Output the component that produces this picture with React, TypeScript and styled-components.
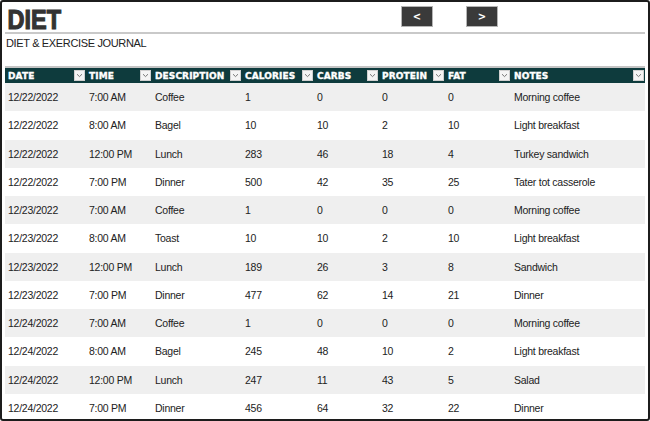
import React from "react";
import styled, { createGlobalStyle } from "styled-components";

const Global = createGlobalStyle`
  html, body { margin: 0; padding: 0; background: #fff; }
  body { font-family: "Liberation Sans", Arial, sans-serif; }
`;

const Frame = styled.div`
  width: 650px;
  height: 421px;
  box-sizing: border-box;
  border: 2px solid #1c1c1c;
  border-radius: 3px;
  padding: 0 3px;
  overflow: hidden;
  background: #fff;
`;

const TitleBar = styled.div`
  display: grid;
  grid-template-columns: 396px 65px 40px;
  align-items: start;
  height: 30px;
  border-bottom: 2px solid #c9c9c9;
`;

const Title = styled.h1`
  margin: 0;
  padding: 5px 0 0 3px;
  font-family: "Liberation Sans", Arial, sans-serif;
  font-weight: 700;
  font-size: 28px;
  line-height: 26px;
  letter-spacing: 0px;
  color: #333;
  -webkit-text-stroke: 1.2px #333;
  transform: scaleX(0.84);
  transform-origin: left center;
`;

const NavButton = styled.button`
  margin-top: 4px;
  width: 32px;
  height: 21px;
  padding: 0;
  background: #3a3a3a;
  border: 1px solid #b5b5b5;
  color: #fff;
  font-family: "DejaVu Sans", sans-serif;
  font-weight: 700;
  font-size: 10px;
  line-height: 19px;
  cursor: pointer;
`;

const Subtitle = styled.div`
  padding: 3px 0 0 1px;
  font-size: 11px;
  line-height: 13px;
  color: #222;
  letter-spacing: -0.35px;
`;

const Table = styled.table`
  margin-top: 16px;
  width: 640px;
  border-collapse: collapse;
  table-layout: fixed;
  border-top: 2px solid #c4c4c4;
`;

const HeadCell = styled.th<{ $w?: number }>`
  box-sizing: border-box;
  width: ${(p) => (p.$w ? `${p.$w}px` : "auto")};
  height: 16px;
  padding: 0 1px 0 3px;
  background: #0e3b3d;
  color: #fff;
  text-align: left;
  vertical-align: middle;
`;

const HeadInner = styled.div`
  display: flex;
  align-items: center;
  justify-content: space-between;
  font-family: "DejaVu Sans", sans-serif;
  font-weight: 700;
  font-size: 9px;
  letter-spacing: 0.1px;
  white-space: nowrap;
  -webkit-text-stroke: 0.35px #fff;
`;

const FilterBox = styled.span`
  display: flex;
  align-items: center;
  justify-content: center;
  width: 11px;
  height: 11px;
  background: #f4f4f4;
  border: 1px solid #d0d0d0;
  box-sizing: border-box;
  flex-shrink: 0;
  -webkit-text-stroke: 0;
`;

const Row = styled.tr<{ $alt: boolean }>`
  height: 28.25px;
  background: ${(p) => (p.$alt ? "#efefef" : "#fff")};
`;

const Cell = styled.td`
  padding: 0 0 0 3px;
  font-size: 10.5px;
  color: #222;
  white-space: nowrap;
  overflow: hidden;
  vertical-align: middle;
  letter-spacing: -0.25px;
`;

const Chevron = () => (
  <svg width="7" height="5" viewBox="0 0 7 5">
    <path d="M1 1.2 L3.5 3.6 L6 1.2" fill="none" stroke="#777" strokeWidth="1" />
  </svg>
);

const columns: { label: string; w?: number }[] = [
  { label: "DATE", w: 81 },
  { label: "TIME", w: 66 },
  { label: "DESCRIPTION", w: 90 },
  { label: "CALORIES", w: 72 },
  { label: "CARBS", w: 65 },
  { label: "PROTEIN", w: 66 },
  { label: "FAT", w: 66 },
  { label: "NOTES" },
];

const rows: string[][] = [
  ["12/22/2022", "7:00 AM", "Coffee", "1", "0", "0", "0", "Morning coffee"],
  ["12/22/2022", "8:00 AM", "Bagel", "10", "10", "2", "10", "Light breakfast"],
  ["12/22/2022", "12:00 PM", "Lunch", "283", "46", "18", "4", "Turkey sandwich"],
  ["12/22/2022", "7:00 PM", "Dinner", "500", "42", "35", "25", "Tater tot casserole"],
  ["12/23/2022", "7:00 AM", "Coffee", "1", "0", "0", "0", "Morning coffee"],
  ["12/23/2022", "8:00 AM", "Toast", "10", "10", "2", "10", "Light breakfast"],
  ["12/23/2022", "12:00 PM", "Lunch", "189", "26", "3", "8", "Sandwich"],
  ["12/23/2022", "7:00 PM", "Dinner", "477", "62", "14", "21", "Dinner"],
  ["12/24/2022", "7:00 AM", "Coffee", "1", "0", "0", "0", "Morning coffee"],
  ["12/24/2022", "8:00 AM", "Bagel", "245", "48", "10", "2", "Light breakfast"],
  ["12/24/2022", "12:00 PM", "Lunch", "247", "11", "43", "5", "Salad"],
  ["12/24/2022", "7:00 PM", "Dinner", "456", "64", "32", "22", "Dinner"],
];

export default function App() {
  return (
    <>
      <Global />
      <Frame>
        <TitleBar>
          <Title>DIET</Title>
          <NavButton>&lt;</NavButton>
          <NavButton>&gt;</NavButton>
        </TitleBar>
        <Subtitle>DIET &amp; EXERCISE JOURNAL</Subtitle>
        <Table>
          <thead>
            <tr>
              {columns.map((c) => (
                <HeadCell key={c.label} $w={c.w}>
                  <HeadInner>
                    <span>{c.label}</span>
                    <FilterBox>
                      <Chevron />
                    </FilterBox>
                  </HeadInner>
                </HeadCell>
              ))}
            </tr>
          </thead>
          <tbody>
            {rows.map((r, i) => (
              <Row key={i} $alt={i % 2 === 0}>
                {r.map((v, j) => (
                  <Cell key={j}>{v}</Cell>
                ))}
              </Row>
            ))}
          </tbody>
        </Table>
      </Frame>
    </>
  );
}
